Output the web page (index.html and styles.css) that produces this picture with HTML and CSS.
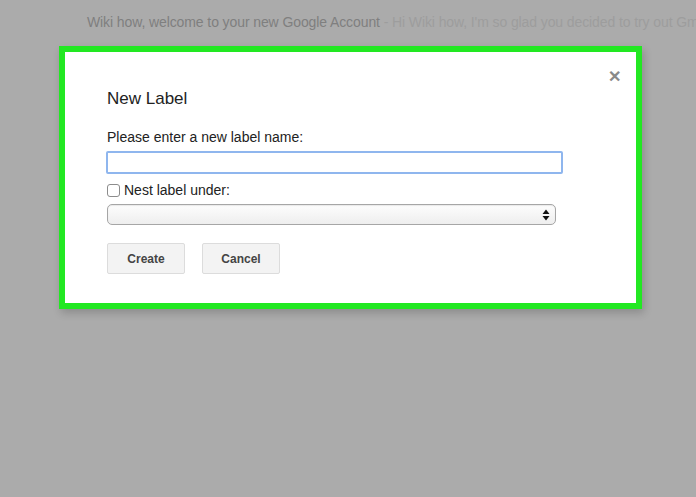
FILE: index.html
```html
<!DOCTYPE html>
<html>
<head>
<meta charset="utf-8">
<link rel="stylesheet" href="styles.css">
</head>
<body>
<div class="page">
  <div class="mailrow">
    <span class="subject">Wiki how, welcome to your new Google Account</span><span class="snippet"> - Hi Wiki how, I'm so glad you decided to try out Gmail</span>
  </div>
  <div class="dialog">
    <span class="close">&#x2715;</span>
    <div class="title">New Label</div>
    <div class="prompt">Please enter a new label name:</div>
    <div class="input"></div>
    <label class="nest"><span class="check"></span><span>Nest label under:</span></label>
    <div class="select">
      <svg class="arrows" width="8" height="12" viewBox="0 0 8 12"><path d="M4 0.5 L7.5 5 L0.5 5 Z M4 11.5 L7.5 7 L0.5 7 Z" fill="#111"/></svg>
    </div>
    <div class="buttons">
      <div class="btn">Create</div>
      <div class="btn">Cancel</div>
    </div>
  </div>
</div>
</body>
</html>
```

FILE: styles.css
```css
html, body {
  margin: 0;
  padding: 0;
  background: #ababab;
  height: 100%;
}
.page {
  width: 696px;
  height: 497px;
  background: #ababab;
  overflow: hidden;
  font-family: "Liberation Sans", Arial, sans-serif;
}
.mailrow {
  padding: 14px 0 0 87px;
  height: 33px;
  box-sizing: border-box;
  font-size: 14px;
  line-height: 17px;
  white-space: nowrap;
  letter-spacing: -0.1px;
}
.subject { color: #7f7f7f; }
.snippet { color: #9d9d9d; }
.dialog {
  position: relative;
  margin: 13px 0 0 59px;
  width: 583px;
  height: 263px;
  box-sizing: border-box;
  border: 6px solid #22e822;
  background: #fff;
  padding: 37px 0 0 42px;
  box-shadow: 2px 4px 8px rgba(0,0,0,0.18);
}
.close {
  position: absolute;
  right: 15px;
  top: 16px;
  font-size: 16px;
  font-weight: bold;
  color: #8a8a8a;
  line-height: 18px;
}
.title {
  font-size: 17px;
  line-height: 20px;
  color: #222;
}
.prompt {
  margin-top: 20px;
  font-size: 14px;
  line-height: 16px;
  color: #222;
}
.input {
  margin-top: 6px;
  margin-left: -1px;
  width: 457px;
  height: 23px;
  box-sizing: border-box;
  border: 2px solid #8fb6ee;
  border-radius: 2px;
  background: #fff;
}
.nest {
  display: flex;
  align-items: center;
  gap: 4px;
  margin-top: 8px;
  font-size: 14px;
  line-height: 16px;
  color: #222;
}
.check {
  width: 13px;
  height: 13px;
  box-sizing: border-box;
  border: 1px solid #8c8c8c;
  border-radius: 3px;
  background: #fff;
}
.select {
  position: relative;
  margin-top: 6px;
  width: 449px;
  height: 21px;
  box-sizing: border-box;
  border: 1px solid #a6a6a6;
  border-radius: 5px;
  background: linear-gradient(#fdfdfd, #eeeeee);
  box-shadow: inset 0 1px 1px rgba(0,0,0,0.08);
}
.arrows {
  position: absolute;
  right: 5px;
  top: 4px;
}
.buttons {
  display: flex;
  gap: 17px;
  margin-top: 18px;
}
.btn {
  width: 78px;
  height: 31px;
  box-sizing: border-box;
  border: 1px solid #dcdcdc;
  border-radius: 2px;
  background: #f3f3f3;
  display: flex;
  align-items: center;
  justify-content: center;
  font-size: 12px;
  font-weight: bold;
  color: #444;
}
```
